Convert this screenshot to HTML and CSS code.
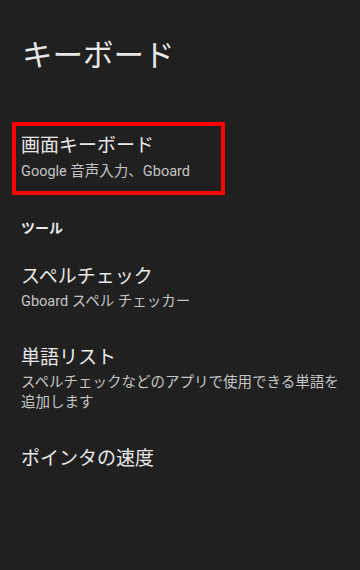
FILE: index.html
```html
<!DOCTYPE html>
<html lang="ja">
<head>
<meta charset="utf-8">
<link rel="stylesheet" href="styles.css">
</head>
<body>
<div class="page">
  <h1 class="page-title">キーボード</h1>
  <div class="list">
    <div class="item item-highlight">
      <div class="item-title">画面キーボード</div>
      <div class="item-sub">Google 音声入力、Gboard</div>
    </div>
    <div class="section-header">ツール</div>
    <div class="item">
      <div class="item-title">スペルチェック</div>
      <div class="item-sub">Gboard スペル チェッカー</div>
    </div>
    <div class="item">
      <div class="item-title">単語リスト</div>
      <div class="item-sub">スペルチェックなどのアプリで使用できる単語を追加します</div>
    </div>
    <div class="item">
      <div class="item-title">ポインタの速度</div>
    </div>
  </div>
</div>
</body>
</html>
```

FILE: styles.css
```css
html, body {
  margin: 0;
  padding: 0;
  background: #202020;
}
body {
  width: 360px;
  height: 570px;
  font-family: Roboto, "Noto Sans CJK JP", sans-serif;
  color: #e6e6e6;
}
.page {
  display: flex;
  flex-direction: column;
}
.page-title {
  margin: 38px 0 0 22px;
  font-weight: 400;
  font-size: 30.5px;
  line-height: 36px;
  color: #e8e8e8;
}
.list {
  display: flex;
  flex-direction: column;
  margin-top: 48px;
}
.item {
  padding: 18px 20px 15px 21px;
}
.item-highlight {
  align-self: flex-start;
  margin-left: 12px;
  padding: 7px 31px 9px 5px;
  border: 4px solid #ff0000;
}
.item-title {
  font-size: 19px;
  line-height: 26px;
  color: #e8e8e8;
}
.item-sub {
  font-size: 14.5px;
  line-height: 20px;
  color: #c4c4c4;
  margin-top: 2px;
}
.item-highlight .item-sub {
  margin-top: 3px;
}
.section-header {
  padding: 23px 21px 8px;
  font-size: 14px;
  font-weight: 700;
  line-height: 20px;
  color: #e8e8e8;
}
```
